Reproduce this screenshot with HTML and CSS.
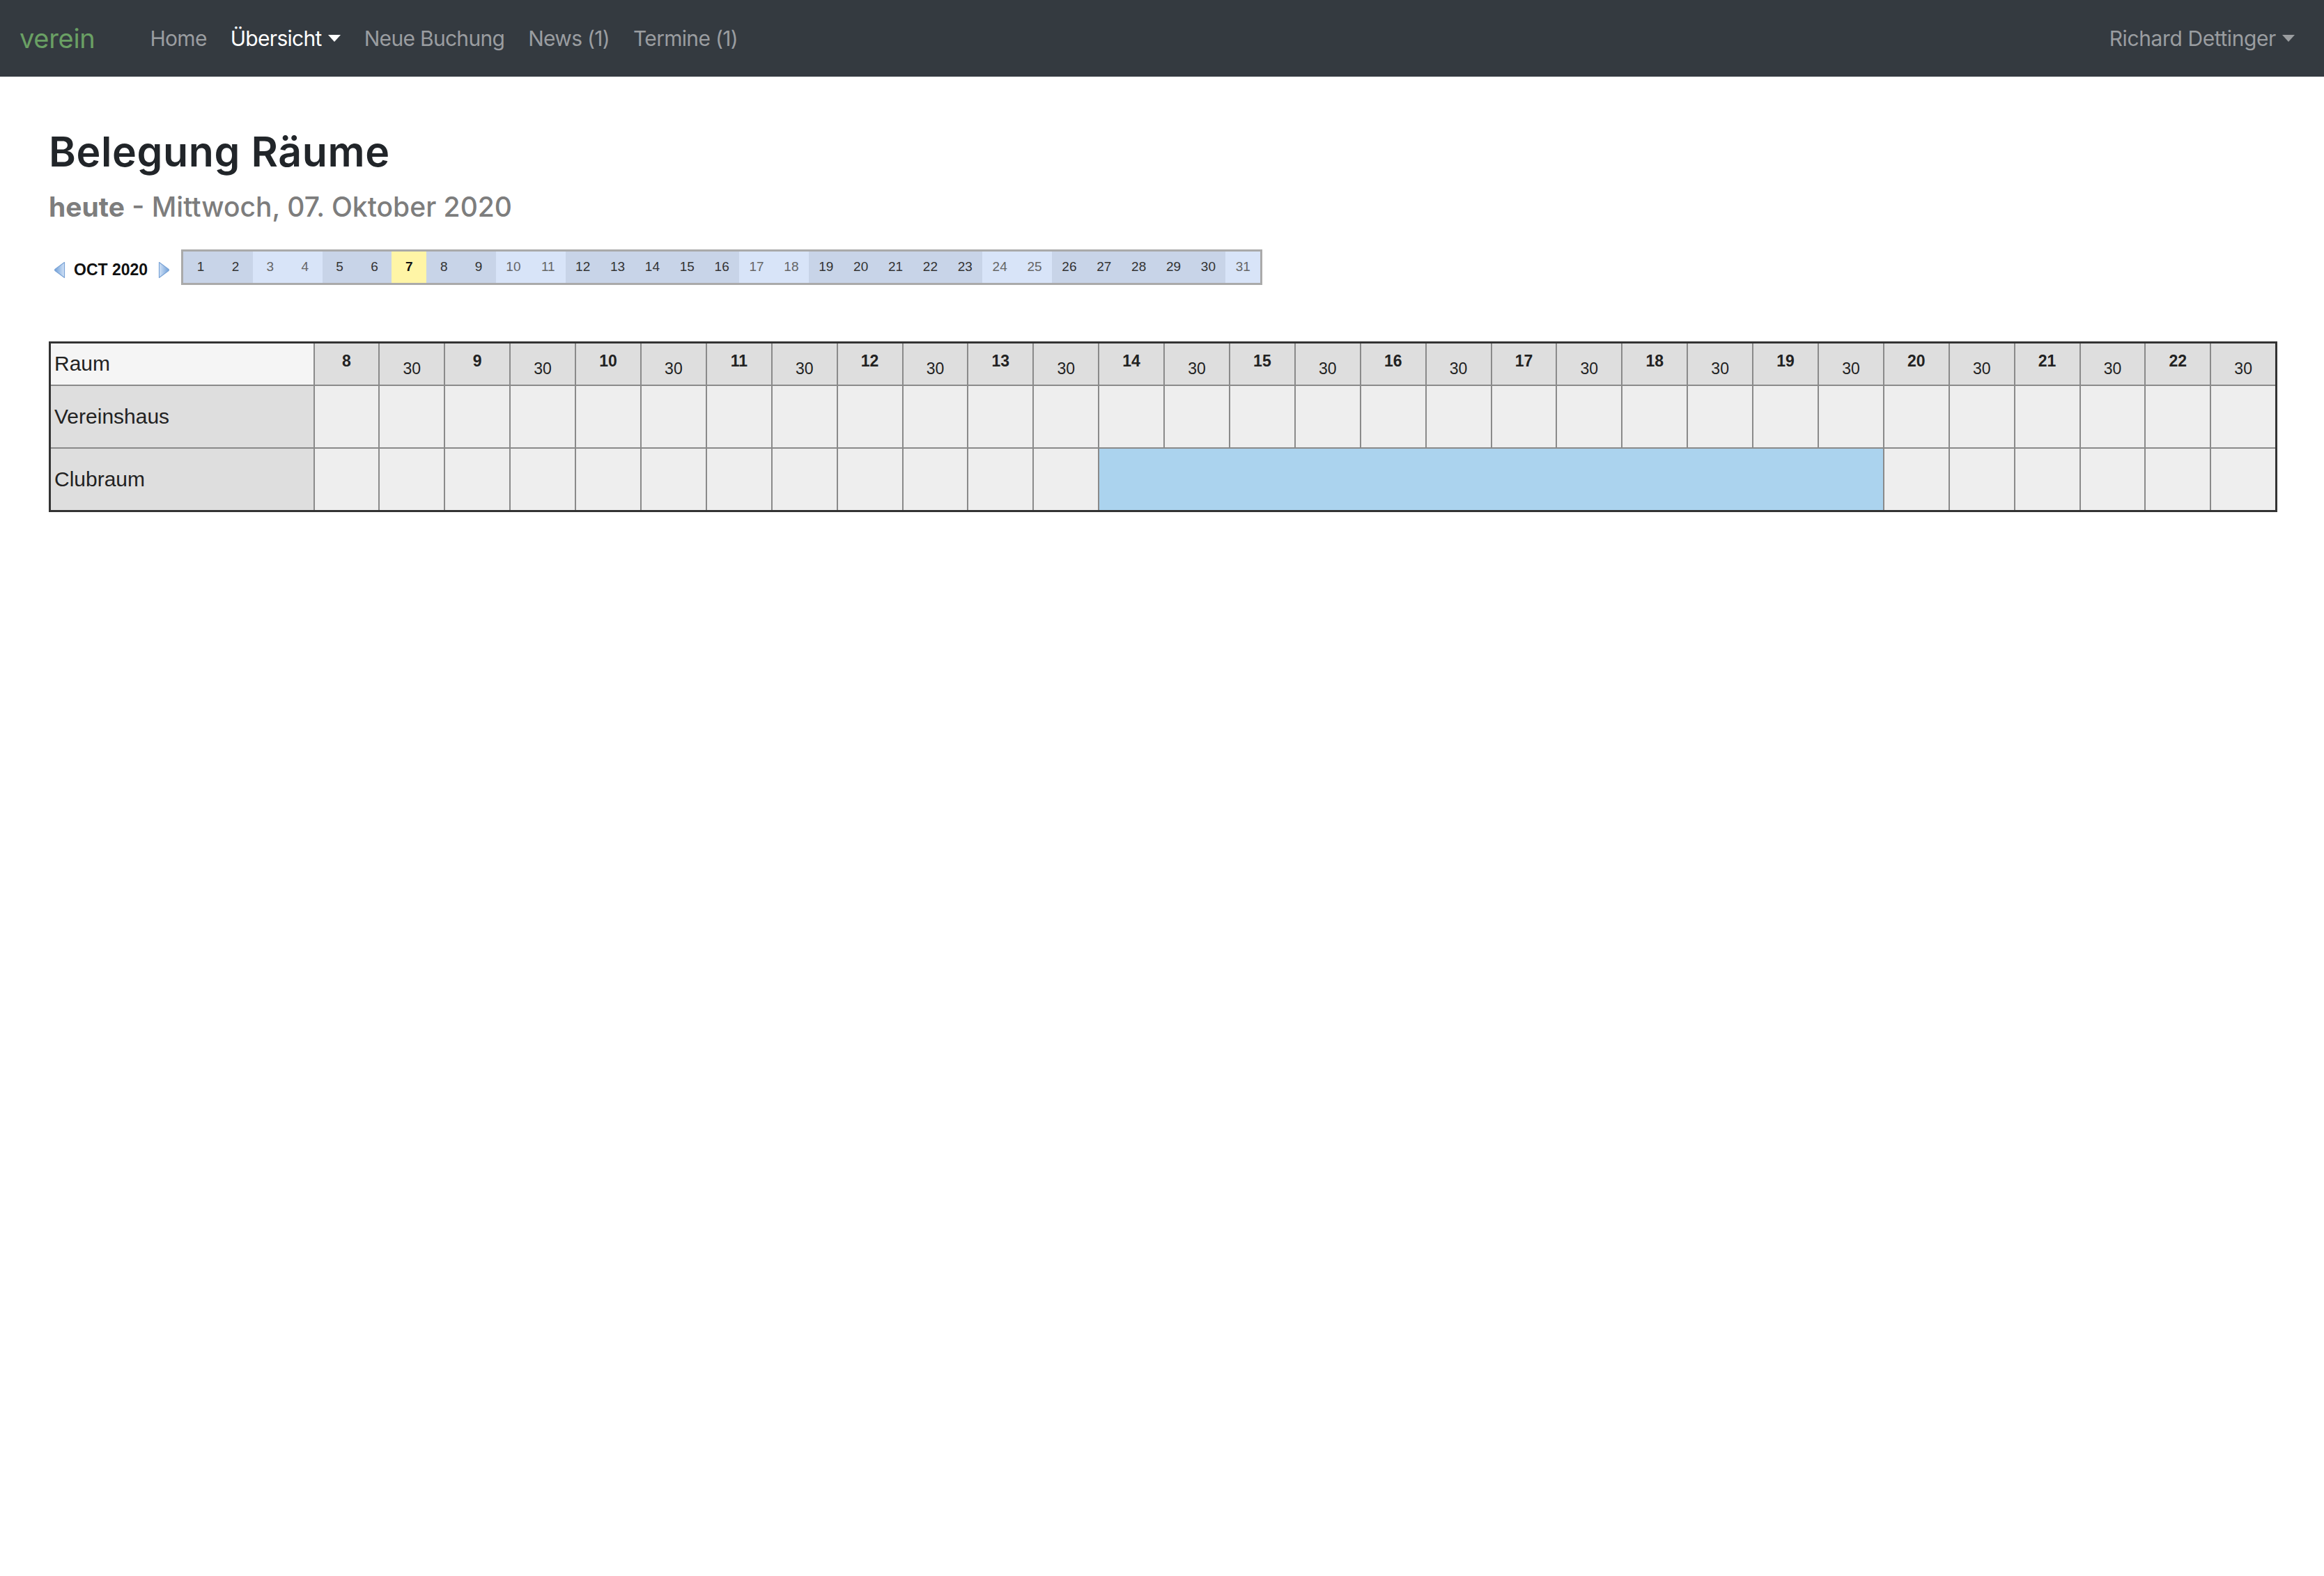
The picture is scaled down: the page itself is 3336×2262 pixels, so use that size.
FILE: index.html
```html
<!DOCTYPE html>
<html lang="de">
<head>
<meta charset="utf-8">
<title>Belegung Räume</title>
<link rel="stylesheet" href="styles.css">
</head>
<body>
<nav class="navbar">
  <a class="brand" href="#">verein</a>
  <ul class="nav">
    <li><a class="nav-link" href="#">Home</a></li>
    <li><a class="nav-link active dropdown-toggle" href="#">Übersicht</a></li>
    <li><a class="nav-link" href="#">Neue Buchung</a></li>
    <li><a class="nav-link" href="#">News (1)</a></li>
    <li><a class="nav-link" href="#">Termine (1)</a></li>
  </ul>
  <div class="nav-right"><a class="nav-link dropdown-toggle" href="#">Richard Dettinger</a></div>
</nav>

<main class="page">
  <h1 class="title">Belegung Räume</h1>
  <h2 class="subtitle"><b>heute</b> - Mittwoch, 07. Oktober 2020</h2>

  <div class="calendar">
    <div class="cal-nav">
      <svg class="arrow" width="17" height="25" viewBox="0 0 17 25"><defs><linearGradient id="ga" x1="0" y1="0" x2="1" y2="0"><stop offset="0" stop-color="#6f9fd8"/><stop offset="1" stop-color="#d3e3f7"/></linearGradient></defs><path d="M15.5 1.5 L2 11.5 Q1 12.5 2 13.5 L15.5 23.5 Z" fill="url(#ga)" stroke="#7aa3d6" stroke-width="1.2" stroke-linejoin="round"/></svg>
      <span class="month">OCT 2020</span>
      <svg class="arrow" width="17" height="25" viewBox="0 0 17 25"><defs><linearGradient id="gb" x1="0" y1="0" x2="1" y2="0"><stop offset="0" stop-color="#d3e3f7"/><stop offset="1" stop-color="#6f9fd8"/></linearGradient></defs><path d="M1.5 1.5 L15 11.5 Q16 12.5 15 13.5 L1.5 23.5 Z" fill="url(#gb)" stroke="#7aa3d6" stroke-width="1.2" stroke-linejoin="round"/></svg>
    </div>
    <div class="days">
      <span class="day">1</span><span class="day">2</span><span class="day we">3</span><span class="day we">4</span><span class="day">5</span><span class="day">6</span><span class="day today">7</span><span class="day">8</span><span class="day">9</span><span class="day we">10</span><span class="day we">11</span><span class="day">12</span><span class="day">13</span><span class="day">14</span><span class="day">15</span><span class="day">16</span><span class="day we">17</span><span class="day we">18</span><span class="day">19</span><span class="day">20</span><span class="day">21</span><span class="day">22</span><span class="day">23</span><span class="day we">24</span><span class="day we">25</span><span class="day">26</span><span class="day">27</span><span class="day">28</span><span class="day">29</span><span class="day">30</span><span class="day we">31</span>
    </div>
  </div>

  <table class="grid">
    <colgroup><col class="col-room"></colgroup>
    <thead>
      <tr>
        <th class="room-head">Raum</th>
        <th class="hour">8</th><th class="half">30</th>
        <th class="hour">9</th><th class="half">30</th>
        <th class="hour">10</th><th class="half">30</th>
        <th class="hour">11</th><th class="half">30</th>
        <th class="hour">12</th><th class="half">30</th>
        <th class="hour">13</th><th class="half">30</th>
        <th class="hour">14</th><th class="half">30</th>
        <th class="hour">15</th><th class="half">30</th>
        <th class="hour">16</th><th class="half">30</th>
        <th class="hour">17</th><th class="half">30</th>
        <th class="hour">18</th><th class="half">30</th>
        <th class="hour">19</th><th class="half">30</th>
        <th class="hour">20</th><th class="half">30</th>
        <th class="hour">21</th><th class="half">30</th>
        <th class="hour">22</th><th class="half">30</th>
      </tr>
    </thead>
    <tbody>
      <tr>
        <td class="room">Vereinshaus</td>
        <td class="slot"></td><td class="slot"></td><td class="slot"></td><td class="slot"></td><td class="slot"></td><td class="slot"></td>
        <td class="slot"></td><td class="slot"></td><td class="slot"></td><td class="slot"></td><td class="slot"></td><td class="slot"></td>
        <td class="slot"></td><td class="slot"></td><td class="slot"></td><td class="slot"></td><td class="slot"></td><td class="slot"></td>
        <td class="slot"></td><td class="slot"></td><td class="slot"></td><td class="slot"></td><td class="slot"></td><td class="slot"></td>
        <td class="slot"></td><td class="slot"></td><td class="slot"></td><td class="slot"></td><td class="slot"></td><td class="slot"></td>
      </tr>
      <tr>
        <td class="room">Clubraum</td>
        <td class="slot"></td><td class="slot"></td><td class="slot"></td><td class="slot"></td><td class="slot"></td><td class="slot"></td>
        <td class="slot"></td><td class="slot"></td><td class="slot"></td><td class="slot"></td><td class="slot"></td><td class="slot"></td>
        <td class="booked" colspan="12"></td>
        <td class="slot"></td><td class="slot"></td><td class="slot"></td><td class="slot"></td><td class="slot"></td><td class="slot"></td>
      </tr>
    </tbody>
  </table>
</main>
</body>
</html>
```

FILE: styles.css
```css
html, body {
  margin: 0;
  padding: 0;
  background: #fff;
}

body {
  font-family: Inter, "Liberation Sans", sans-serif;
  color: #212529;
}

/* Navbar */
.navbar {
  display: flex;
  align-items: center;
  height: 110px;
  box-sizing: border-box;
  padding: 0 25px 0 28px;
  background: #343a40;
}

.brand {
  color: #6aa064;
  font-size: 38px;
  text-decoration: none;
  margin-right: 62px;
  letter-spacing: -0.3px;
}

.nav {
  display: flex;
  list-style: none;
  margin: 0;
  padding: 0;
}

.nav-link {
  display: block;
  padding: 8px 17px;
  color: #9a9da0;
  font-size: 30px;
  letter-spacing: -0.7px;
  text-decoration: none;
}

.nav-link.active {
  color: #fff;
}

.dropdown-toggle::after {
  content: "";
  display: inline-block;
  margin-left: 9px;
  vertical-align: 0.2em;
  border-top: 10px solid;
  border-left: 9px solid transparent;
  border-right: 9px solid transparent;
}

.nav-right {
  margin-left: auto;
}

.nav-right .nav-link {
  letter-spacing: -0.4px;
}

/* Page */
.page {
  padding: 0 67px 0 70px;
}

.title {
  margin: 73px 0 0;
  font-size: 59px;
  font-weight: 600;
  line-height: 1.2;
  letter-spacing: 0.6px;
  color: #212529;
}

.subtitle {
  margin: 20px 0 0;
  font-size: 39px;
  font-weight: 500;
  line-height: 1.2;
  color: #7d7d7d;
}

.subtitle b {
  font-weight: 700;
}

/* Calendar strip */
.calendar {
  display: flex;
  align-items: center;
  margin-top: 37px;
}

.cal-nav {
  display: flex;
  align-items: center;
  margin: 8px 0 0 7px;
}

.arrow {
  display: block;
}

.month {
  font-family: "Liberation Sans", Arial, sans-serif;
  font-weight: 700;
  font-size: 23px;
  color: #111;
  margin: 0 15px 0 12px;
}

.days {
  display: flex;
  width: 1552px;
  height: 51px;
  box-sizing: border-box;
  margin-left: 16px;
  border: 3px solid #aaa;
  background: #c8d4e8;
}

.day {
  flex: 1;
  display: flex;
  align-items: center;
  justify-content: center;
  font-family: "Liberation Sans", Arial, sans-serif;
  font-size: 19px;
  color: #333;
}

.day.we {
  background: #d8e4f8;
  color: #666;
}

.day.today {
  background: #fff5a6;
  color: #111;
  font-weight: 700;
}

/* Occupancy grid */
.grid {
  width: 100%;
  margin-top: 81px;
  border-collapse: collapse;
  table-layout: fixed;
  border: 3px solid #333;
  font-family: "Liberation Sans", Arial, sans-serif;
  color: #222;
}

.col-room {
  width: 379px;
}

.grid th,
.grid td {
  border: 2px solid #8a8a8a;
  padding: 0;
}

.grid thead tr {
  height: 62px;
}

.grid thead th {
  background: #dedede;
  font-size: 23px;
}

.grid th.room-head {
  background: #f5f5f5;
  text-align: left;
  font-weight: 400;
  font-size: 30px;
  padding-left: 5px;
  vertical-align: middle;
}

.grid th.hour {
  font-weight: 700;
  vertical-align: top;
  padding-top: 12px;
}

.grid th.half {
  font-weight: 400;
  vertical-align: bottom;
  padding-bottom: 9px;
}

.grid tbody tr {
  height: 90px;
}

.grid td.room {
  background: #dedede;
  font-size: 30px;
  padding-left: 5px;
}

.grid td.slot {
  background: #eee;
}

.grid td.booked {
  background: #abd3ee;
}
```
